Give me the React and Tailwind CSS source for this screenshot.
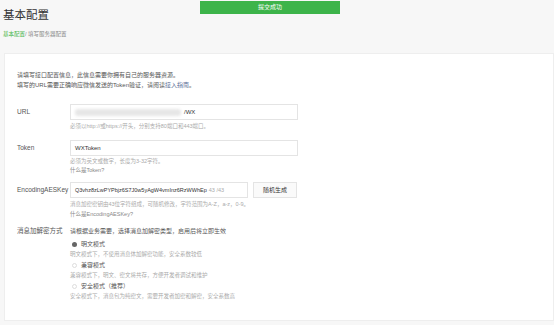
import React from "react";

const font = { fontFamily: '"Liberation Sans", "Noto Sans CJK SC", sans-serif' };

const Field = ({ label, children, className = "" }) => (
  <div className={`flex ${className}`}>
    <div className="w-[53px] shrink-0 text-[6.5px] text-[#555] leading-[16px]">{label}</div>
    <div className="flex-1">{children}</div>
  </div>
);

const Radio = ({ checked, title, desc }) => (
  <div className="mb-[1px]">
    <div className="flex items-center gap-[4px] h-[10px] pl-[2px]">
      <span
        className={`w-[5px] h-[5px] rounded-full ${
          checked ? "bg-[#666]" : "border border-[#ddd] bg-white"
        }`}
      />
      <span className="text-[6px] text-[#555]">{title}</span>
    </div>
    <div className="text-[5.5px] text-[#aaa] leading-[10px]">{desc}</div>
  </div>
);

export default function App() {
  return (
    <div className="w-[554px] h-[325px] bg-[#f7f7f7] relative overflow-hidden" style={font}>
      <div className="absolute left-[200px] top-[1px] w-[140px] h-[13px] bg-[#3db44a] text-white text-[6px] flex items-center justify-center">
        提交成功
      </div>

      <div className="px-[3px] pt-[7px]">
        <h1 className="text-[11.5px] text-[#333] leading-[16px]">基本配置</h1>
        <div className="text-[5.5px] mt-[7px] text-[#888]">
          <span className="text-[#44b549]">基本配置</span>/ 填写服务器配置
        </div>
      </div>

      <div className="absolute left-[4px] right-0 top-[53px] h-[268px] bg-white border border-[#eee] pl-[12px] pt-[16px]">
        <div className="text-[6px] text-[#555] leading-[10px]">
          <div>请填写接口配置信息，此信息需要你拥有自己的服务器资源。</div>
          <div>
            填写的URL需要正确响应微信发送的Token验证，请阅读<span className="text-[#576b95]">接入指南</span>。
          </div>
        </div>

        <Field label="URL" className="mt-[14px]">
          <div className="w-[228px] h-[16px] border border-[#e4e4e4] flex items-center pl-[4px] text-[6px] text-[#333]">
            <span className="w-[106px] h-[7px] bg-[#e6e6e6] rounded-[3px] blur-[1.5px]" />
            <span className="ml-[3px]">/WX</span>
          </div>
          <div className="text-[5.5px] text-[#aaa] leading-[10px] mt-[1px]">
            必须以http://或https://开头，分别支持80端口和443端口。
          </div>
        </Field>

        <Field label="Token" className="mt-[9px]">
          <div className="w-[228px] h-[16px] border border-[#e4e4e4] flex items-center pl-[4px] text-[6px] text-[#333]">
            WXToken
          </div>
          <div className="text-[5.5px] text-[#aaa] leading-[9px] mt-[1px]">
            <div>必须为英文或数字，长度为3-32字符。</div>
            <div className="text-[#888]">什么是Token?</div>
          </div>
        </Field>

        <Field label="EncodingAESKey" className="mt-[7px]">
          <div className="flex gap-[5px]">
            <div className="w-[178px] h-[16px] border border-[#e4e4e4] flex items-center pl-[4px] text-[5.5px] text-[#333] whitespace-nowrap overflow-hidden">
              Q3vhz8zLwPYPbjz6S7J0w5yAgW4vmInz6RzWWhEp
              <span className="ml-[2px] text-[#aaa]">43 /43</span>
            </div>
            <div className="w-[44px] h-[16px] border border-[#e4e4e4] bg-[#fafafa] flex items-center justify-center text-[6px] text-[#333]">
              随机生成
            </div>
          </div>
          <div className="text-[5.5px] text-[#aaa] leading-[10px] mt-[1px]">
            <div>消息加密密钥由43位字符组成，可随机修改，字符范围为A-Z，a-z，0-9。</div>
            <div className="text-[#888]">什么是EncodingAESKey?</div>
          </div>
        </Field>

        <Field label="消息加解密方式" className="mt-[4px]">
          <div className="text-[6px] text-[#555] leading-[16px]">请根据业务需要，选择消息加解密类型，启用后将立即生效</div>
          <Radio checked title="明文模式" desc="明文模式下，不使用消息体加解密功能，安全系数较低" />
          <Radio title="兼容模式" desc="兼容模式下，明文、密文将共存，方便开发者调试和维护" />
          <Radio title="安全模式（推荐）" desc="安全模式下，消息包为纯密文，需要开发者加密和解密，安全系数高" />
        </Field>
      </div>
    </div>
  );
}
